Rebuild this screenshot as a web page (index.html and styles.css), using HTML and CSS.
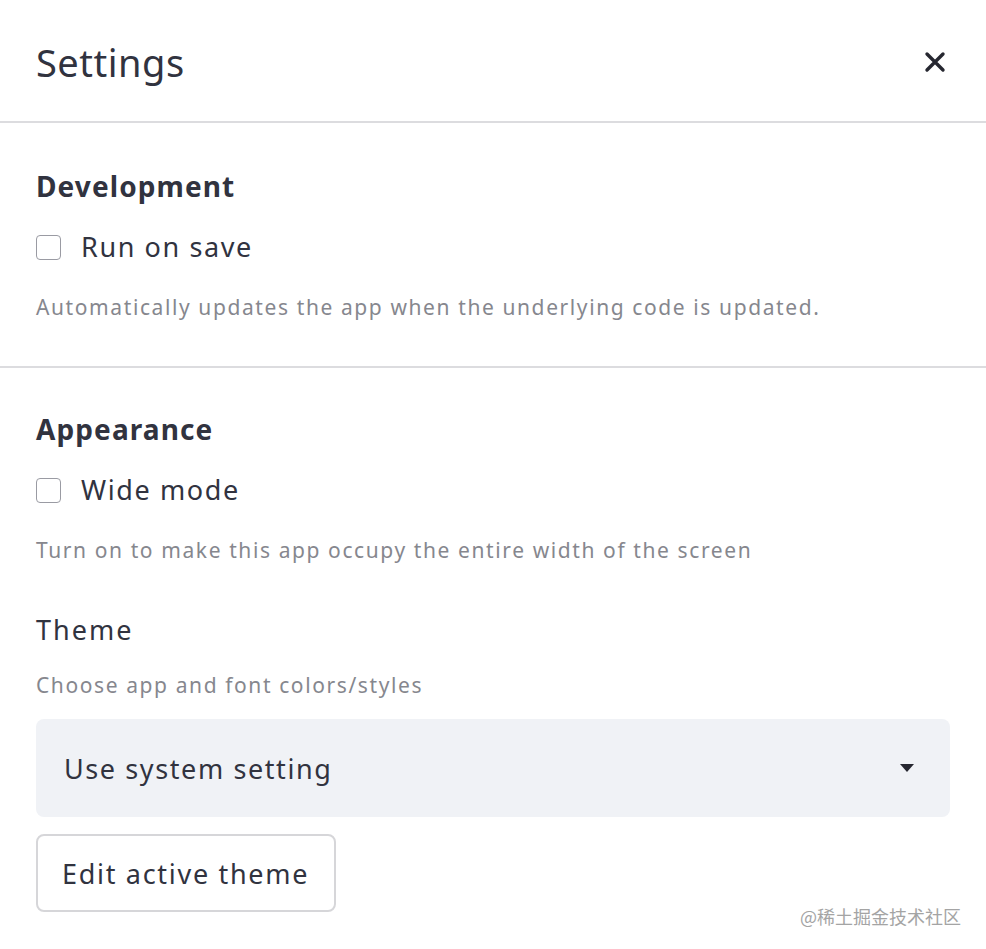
FILE: index.html
```html
<!DOCTYPE html>
<html>
<head>
    <title>Settings</title>
    <link rel="stylesheet" href="styles.css">
</head>
<body>
    <div class="dialog">
        <div class="dialog-header">
            <h1 class="dialog-title">Settings</h1>
            <button class="close-button" aria-label="Close">
                <svg width="22" height="22" viewBox="0 0 22 22">
                    <path d="M3 3 L19 19 M19 3 L3 19" stroke="#262730" stroke-width="3.4" stroke-linecap="round"/>
                </svg>
            </button>
        </div>

        <div class="section">
            <h3 class="section-title">Development</h3>
            <label class="check-row">
                <span class="checkbox"></span>
                <span>Run on save</span>
            </label>
            <p class="help-text">Automatically updates the app when the underlying code is updated.</p>
        </div>

        <div class="section last">
            <h3 class="section-title">Appearance</h3>
            <label class="check-row">
                <span class="checkbox"></span>
                <span>Wide mode</span>
            </label>
            <p class="help-text">Turn on to make this app occupy the entire width of the screen</p>

            <div class="field-label">Theme</div>
            <p class="help-text field-help">Choose app and font colors/styles</p>
            <div class="select-box">
                <span>Use system setting</span>
                <span class="select-arrow"></span>
            </div>
            <button class="outline-button">Edit active theme</button>
        </div>
    </div>
    <div class="watermark">@稀土掘金技术社区</div>
</body>
</html>
```

FILE: styles.css
```css
body {
    margin: 0;
    background-color: #ffffff;
    font-family: "Noto Sans", "Open Sans", sans-serif;
    color: #31333f;
    letter-spacing: 1.6px;
}

.dialog {
    width: 986px;
}

.dialog-header {
    display: flex;
    justify-content: space-between;
    align-items: center;
    height: 123px;
    padding: 2px 36px 0 36px;
    box-sizing: border-box;
    border-bottom: 2px solid #dcdcdf;
}

.dialog-title {
    margin: 0;
    font-size: 38px;
    font-weight: 400;
    line-height: 50px;
    letter-spacing: 0.5px;
}

.close-button {
    display: flex;
    padding: 0;
    margin-right: 4px;
    border: none;
    background: none;
    cursor: pointer;
}

.section {
    padding: 45px 36px 44px 36px;
    border-bottom: 2px solid #dcdcdf;
}

.section.last {
    padding-top: 43px;
    border-bottom: none;
}

.section-title {
    margin: 0;
    font-size: 28px;
    font-weight: 700;
    line-height: 36px;
    letter-spacing: 1.1px;
}

.check-row {
    display: flex;
    align-items: center;
    gap: 20px;
    margin-top: 25px;
    font-size: 27px;
    line-height: 36px;
}

.checkbox {
    width: 23px;
    height: 23px;
    border: 1px solid #9a9ba3;
    border-radius: 4px;
    box-sizing: content-box;
}

.help-text {
    margin: 27px 0 0 0;
    font-size: 21px;
    line-height: 30px;
    color: #86878e;
}

.field-label {
    margin-top: 47px;
    font-size: 27px;
    line-height: 36px;
    letter-spacing: 2px;
}

.help-text.field-help {
    margin-top: 22px;
}

.select-box {
    display: flex;
    justify-content: space-between;
    align-items: center;
    height: 98px;
    margin-top: 19px;
    padding: 0 36px 0 28px;
    background-color: #f0f2f6;
    border-radius: 8px;
    font-size: 27px;
}

.select-arrow {
    width: 0;
    height: 0;
    border-left: 7px solid transparent;
    border-right: 7px solid transparent;
    border-top: 8px solid #262730;
}

.outline-button {
    display: block;
    height: 78px;
    margin-top: 17px;
    padding: 0 25px 0 24px;
    background-color: #ffffff;
    border: 2px solid #d6d6d9;
    border-radius: 8px;
    font-family: inherit;
    font-size: 27px;
    letter-spacing: 1.7px;
    color: #31333f;
}

.watermark {
    position: absolute;
    right: 25px;
    top: 903px;
    font-family: "Noto Sans CJK SC", sans-serif;
    font-size: 18px;
    letter-spacing: 0;
    color: #a4a4a4;
}
```
